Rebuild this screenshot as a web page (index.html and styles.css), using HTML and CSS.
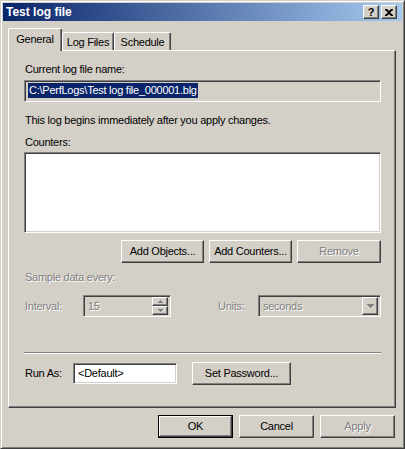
FILE: index.html
```html
<!DOCTYPE html>
<html>
<head>
<meta charset="utf-8">
<link rel="stylesheet" href="styles.css">
</head>
<body>
<div class="window">
  <div class="titlebar">
    <span class="title">Test log file</span>
    <div class="caption-btns">
      <div class="cap-btn help">?</div>
      <div class="cap-btn close">
        <svg width="8" height="7" viewBox="0 0 8 7"><path d="M0 0h2l2 2 2-2h2v1L5 3.5 8 6v1H6L4 5 2 7H0V6l3-2.5L0 1z" fill="#000"/></svg>
      </div>
    </div>
  </div>
  <div class="client">
    <div class="tabs">
      <div class="tab active t-general">General</div>
      <div class="tab t-logfiles">Log Files</div>
      <div class="tab t-schedule">Schedule</div>
    </div>
    <div class="panel">
      <div class="label">Current log file name:</div>
      <div class="field readonly filename"><span class="sel">C:\PerfLogs\Test log file_000001.blg</span></div>
      <div class="label note">This log begins immediately after you apply changes.</div>
      <div class="label counters">Counters:</div>
      <div class="field listbox"></div>
      <div class="btn-row">
        <div class="btn w83">Add Objects...</div>
        <div class="btn w83">Add Counters...</div>
        <div class="btn w84 disabled">Remove</div>
      </div>
      <div class="label disabled sample">Sample data every:</div>
      <div class="interval-row">
        <span class="disabled lbl-interval">Interval:</span>
        <div class="field spin readonly">
          <span class="disabled spin-val">15</span>
          <div class="spin-btns">
            <div class="spin-btn"><svg width="5" height="3" viewBox="0 0 5 3"><path d="M2 0h1v1h1v1h1v1H0V2h1V1h1z" fill="#808080"/></svg></div>
            <div class="spin-btn"><svg width="5" height="3" viewBox="0 0 5 3"><path d="M0 0h5v1H4v1H3v1H2V2H1V1H0z" fill="#808080"/></svg></div>
          </div>
        </div>
        <span class="disabled lbl-units">Units:</span>
        <div class="field combo readonly">
          <span class="disabled combo-val">seconds</span>
          <div class="combo-btn"><svg width="7" height="4" viewBox="0 0 7 4"><path d="M0 0h7v1H6v1H5v1H4v1H3V3H2V2H1V1H0z" fill="#808080"/></svg></div>
        </div>
      </div>
      <div class="sep"></div>
      <div class="runas-row">
        <span class="lbl-runas">Run As:</span>
        <div class="field runas">&lt;Default&gt;</div>
        <div class="btn setpw">Set Password...</div>
      </div>
    </div>
    <div class="dialog-btns">
      <div class="btn w75 default">OK</div>
      <div class="btn w75">Cancel</div>
      <div class="btn w75 disabled">Apply</div>
    </div>
  </div>
</div>
</body>
</html>
```
FILE: styles.css
```css
* { box-sizing: border-box; }
html, body { margin: 0; padding: 0; }
body {
  background: #D4D0C8;
  font-family: "Liberation Sans", Arial, sans-serif;
  font-size: 11px;
  line-height: 13px;
  letter-spacing: -0.25px;
  color: #000;
}
.window {
  width: 405px;
  height: 449px;
  background: #D4D0C8;
  border: 1px solid;
  border-color: #D4D0C8 #404040 #404040 #D4D0C8;
  box-shadow: inset 1px 1px #fff, inset -1px -1px #808080;
  padding: 2px;
  display: flex;
  flex-direction: column;
}
.titlebar {
  height: 18px;
  background: linear-gradient(to right, #0A246A, #A6CAF0);
  display: flex;
  align-items: center;
  justify-content: space-between;
  padding: 0 5px 0 3px;
}
.title {
  color: #fff;
  font-weight: bold;
  font-size: 12px;
  letter-spacing: 0;
}
.caption-btns { display: flex; gap: 2px; }
.cap-btn {
  width: 16px;
  height: 14px;
  background: #D4D0C8;
  border: 1px solid;
  border-color: #fff #404040 #404040 #fff;
  box-shadow: inset -1px -1px #808080;
  display: flex;
  align-items: center;
  justify-content: center;
  font-weight: bold;
  font-size: 11px;
  line-height: 12px;
  letter-spacing: 0;
}
.client {
  flex: 1;
  display: flex;
  flex-direction: column;
}
.tabs {
  margin-top: 7px;
  height: 22px;
  padding-left: 5px;
  display: flex;
  align-items: flex-end;
}
.tab {
  height: 18px;
  border: 1px solid;
  border-bottom: none;
  border-color: #fff #404040 #404040 #fff;
  box-shadow: inset -1px 0 #808080;
  border-radius: 2px 2px 0 0;
  display: flex;
  align-items: center;
  justify-content: center;
  padding-top: 1px;
}
.tab.active {
  height: 23px;
  margin-bottom: -1px;
  position: relative;
  z-index: 1;
  background: #D4D0C8;
  padding-bottom: 3px;
}
.t-general { width: 54px; }
.t-logfiles { width: 52px; }
.t-schedule { width: 57px; }
.panel {
  margin: 0 6px 0 5px;
  height: 358px;
  border: 1px solid;
  border-color: #fff #404040 #404040 #fff;
  box-shadow: inset -1px -1px #808080;
  padding: 12px 14px 0 15px;
  display: flex;
  flex-direction: column;
}
.label { padding-left: 1px; white-space: nowrap; }
.field {
  border: 1px solid;
  border-color: #808080 #fff #fff #808080;
  box-shadow: inset 1px 1px #404040, inset -1px -1px #D4D0C8;
  background: #fff;
}
.field.readonly { background: #D4D0C8; }
.filename {
  margin-top: 4px;
  height: 22px;
  padding: 2px 0 0 3px;
  display: flex;
  align-items: flex-start;
}
.sel {
  background: #0A246A;
  color: #fff;
  line-height: 15px;
  padding: 0 1px;
  white-space: nowrap;
}
.note { margin-top: 12px; }
.counters { margin-top: 9px; }
.listbox { margin-top: 3px; height: 81px; }
.btn {
  height: 23px;
  background: #D4D0C8;
  border: 1px solid;
  border-color: #fff #404040 #404040 #fff;
  box-shadow: inset -1px -1px #808080;
  display: flex;
  align-items: center;
  justify-content: center;
  white-space: nowrap;
}
.btn.default {
  border-color: #000;
  box-shadow: inset -1px -1px #404040, inset 1px 1px #fff, inset -2px -2px #808080;
}
.disabled {
  color: #808080;
  text-shadow: 1px 1px 0 #fff;
}
.w83 { width: 83px; }
.w84 { width: 84px; }
.w75 { width: 75px; }
.btn-row {
  margin-top: 7px;
  display: flex;
  justify-content: flex-end;
  gap: 5px;
}
.sample { margin-top: 8px; }
.interval-row {
  margin-top: 11px;
  height: 22px;
  display: flex;
  align-items: center;
}
.lbl-interval { width: 59px; padding-left: 1px; }
.spin {
  width: 88px;
  height: 22px;
  display: flex;
  align-items: center;
  justify-content: space-between;
  padding: 2px 2px 2px 4px;
}
.spin-btns {
  width: 16px;
  height: 18px;
  display: flex;
  flex-direction: column;
}
.spin-btn {
  flex: 1;
  background: #D4D0C8;
  border: 1px solid;
  border-color: #fff #404040 #404040 #fff;
  box-shadow: inset -1px -1px #808080;
  display: flex;
  align-items: center;
  justify-content: center;
}
.lbl-units { margin-left: 46px; width: 41px; padding-left: 1px; }
.combo {
  width: 123px;
  height: 22px;
  display: flex;
  align-items: center;
  justify-content: space-between;
  padding: 2px 2px 2px 4px;
}
.combo-btn {
  width: 16px;
  height: 18px;
  background: #D4D0C8;
  border: 1px solid;
  border-color: #fff #404040 #404040 #fff;
  box-shadow: inset -1px -1px #808080;
  display: flex;
  align-items: center;
  justify-content: center;
}
.sep {
  margin-top: 35px;
  height: 2px;
  border-top: 1px solid #808080;
  border-bottom: 1px solid #fff;
}
.runas-row {
  margin-top: 8px;
  height: 23px;
  display: flex;
  align-items: center;
}
.lbl-runas { width: 49px; padding-left: 1px; }
.runas {
  width: 104px;
  height: 21px;
  padding: 3px 0 0 4px;
}
.setpw { width: 99px; margin-left: 15px; }
.dialog-btns {
  margin-top: 7px;
  margin-right: 7px;
  display: flex;
  justify-content: flex-end;
  gap: 6px;
}
```
